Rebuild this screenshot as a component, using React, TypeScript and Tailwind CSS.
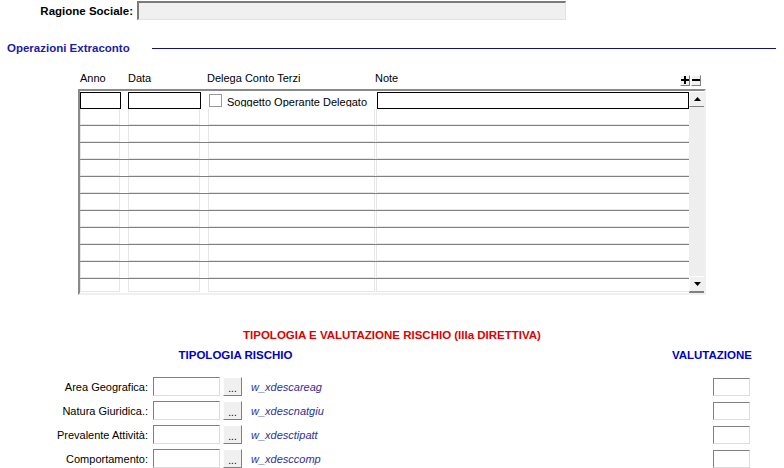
import React from 'react';

/**
 * Operazioni Extraconto form
 * Legacy-style data entry page: ragione sociale, operations grid, risk section.
 */

const FONT = { fontFamily: '"Liberation Sans", Arial, sans-serif' };

// insets used by the old-school text boxes
const inset = 'border border-[#808080] border-r-[#dcdcdc] border-b-[#dcdcdc] bg-white';
const raised = 'border border-white border-r-[#808080] border-b-[#808080] bg-[#f0f0f0]';

const RISK_ROWS = [
  { label: 'Area Geografica:', desc: 'w_xdescareag' },
  { label: 'Natura Giuridica.:', desc: 'w_xdescnatgiu' },
  { label: 'Prevalente Attività:', desc: 'w_xdesctipatt' },
  { label: 'Comportamento:', desc: 'w_xdesccomp' },
];

function EmptyRow({ last = false }: { last?: boolean }) {
  return (
    <div
      className={`flex shrink-0 ${last ? 'h-[13px]' : 'h-[17px] border-b border-[#808080]'}`}
    >
      <div className="w-[40px] border border-[#e6e6e6] border-t-0" />
      <div className="ml-[8px] w-[72px] border border-[#e6e6e6] border-t-0" />
      <div className="ml-[8px] w-[167px] border border-[#e6e6e6] border-t-0" />
      <div className="ml-[1px] flex-1 border border-[#e6e6e6] border-t-0 border-r-0" />
    </div>
  );
}

function ScrollArrow({ up }: { up: boolean }) {
  return (
    <div className={`h-[16px] w-[16px] flex items-center justify-center ${raised}`}>
      <svg width="7" height="4" viewBox="0 0 7 4">
        {up ? <path d="M3.5 0 L7 4 L0 4 Z" fill="#000" /> : <path d="M0 0 L7 0 L3.5 4 Z" fill="#000" />}
      </svg>
    </div>
  );
}

function MiniButton({ plus }: { plus: boolean }) {
  return (
    <div className={`w-[10px] h-[11px] flex items-center justify-center ${raised}`}>
      <svg width="8" height="8" viewBox="0 0 8 8">
        <rect x="0" y="3" width="8" height="2" fill="#000" />
        {plus && <rect x="3" y="0" width="2" height="8" fill="#000" />}
      </svg>
    </div>
  );
}

function OperationsGrid() {
  return (
    <div className="ml-[78px] mt-[4px] w-[628px] h-[206px] flex border-2 border-[#8a8a8a] border-r-[#f0f0f0] border-b-[#f0f0f0] overflow-hidden">
      <div className="flex-1 flex flex-col">
        {/* editing row */}
        <div className="h-[18px] shrink-0 flex items-start pt-[1px]">
          <div className="w-[41px] h-[17px] border border-black bg-white" />
          <div className="ml-[7px] w-[73px] h-[17px] border border-black bg-white" />
          <div className="ml-[8px] w-[168px] h-[15px] flex items-start overflow-hidden">
            <div className="mt-[2px] w-[13px] h-[13px] border border-[#9a9a9a] bg-white" />
            <span className="ml-[5px] text-[11px] leading-[14px] mt-[3px] text-black whitespace-nowrap">
              Soggetto Operante Delegato
            </span>
          </div>
          <div className="w-[312px] h-[17px] border border-black bg-white" />
        </div>
        {Array.from({ length: 10 }).map((_, i) => (
          <EmptyRow key={i} />
        ))}
        <EmptyRow last />
      </div>
      {/* scrollbar */}
      <div className="w-[16px] flex flex-col justify-between bg-[#eeeeee] border-r border-b border-[#808080]">
        <ScrollArrow up />
        <ScrollArrow up={false} />
      </div>
    </div>
  );
}

export default function App() {
  return (
    <div className="w-[784px] h-[468px] bg-white overflow-hidden text-[11px] text-black" style={FONT}>
      {/* Ragione sociale */}
      <div className="flex items-center pt-[1px] h-[20px]">
        <span className="w-[133px] text-right font-bold text-[11.5px] leading-[14px]">Ragione Sociale:</span>
        <div className="ml-[4px] w-[429px] h-[19px] bg-[#f0f0f0] border-2 border-[#7a7a7a] border-r-[#e2e2e2] border-b-[#e2e2e2] border-r border-b" />
      </div>

      {/* Section header */}
      <div className="mt-[21px] h-[14px] flex items-center pl-[7px] pr-[8px]">
        <span className="w-[145px] font-bold text-[11.5px] text-[#1c1ca8] leading-[14px] whitespace-nowrap">
          Operazioni Extraconto
        </span>
        <div className="flex-1 h-px bg-[#10108a]" />
      </div>

      {/* Column headers */}
      <div className="mt-[16px] ml-[80px] w-[626px] h-[14px] flex items-center leading-[14px]">
        <span className="w-[48px]">Anno</span>
        <span className="w-[79px]">Data</span>
        <span className="w-[168px]">Delega Conto Terzi</span>
        <span className="flex-1">Note</span>
        <div className="flex gap-px mt-[4px] mr-[5px]">
          <MiniButton plus />
          <MiniButton plus={false} />
        </div>
      </div>

      <OperationsGrid />

      {/* Rischio */}
      <div className="mt-[33px] h-[14px] text-center font-bold text-[11.5px] text-[#e00000] leading-[14px]">
        TIPOLOGIA E VALUTAZIONE RISCHIO (IIIa DIRETTIVA)
      </div>
      <div className="mt-[6px] h-[14px] flex leading-[14px] font-bold text-[11.5px] text-[#0000c8]">
        <span className="w-[471px] text-center">TIPOLOGIA RISCHIO</span>
        <span className="w-[281px] text-right">VALUTAZIONE</span>
      </div>

      <div className="mt-[15px] flex flex-col gap-[5px]">
        {RISK_ROWS.map((row) => (
          <div key={row.label} className="flex items-center h-[19px]">
            <span className="w-[148px] text-right leading-[14px]">{row.label}</span>
            <div className={`ml-[5px] w-[67px] h-[19px] ${inset}`} />
            <div className={`ml-[3px] w-[19px] h-[19px] flex items-end justify-center pb-[1px] text-[10px] leading-[10px] ${raised}`}>
              ...
            </div>
            <span className="ml-[9px] w-[462px] italic text-[#2e2e9e] leading-[14px]">{row.desc}</span>
            <div className={`w-[37px] h-[18px] ${inset}`} />
          </div>
        ))}
      </div>
    </div>
  );
}
